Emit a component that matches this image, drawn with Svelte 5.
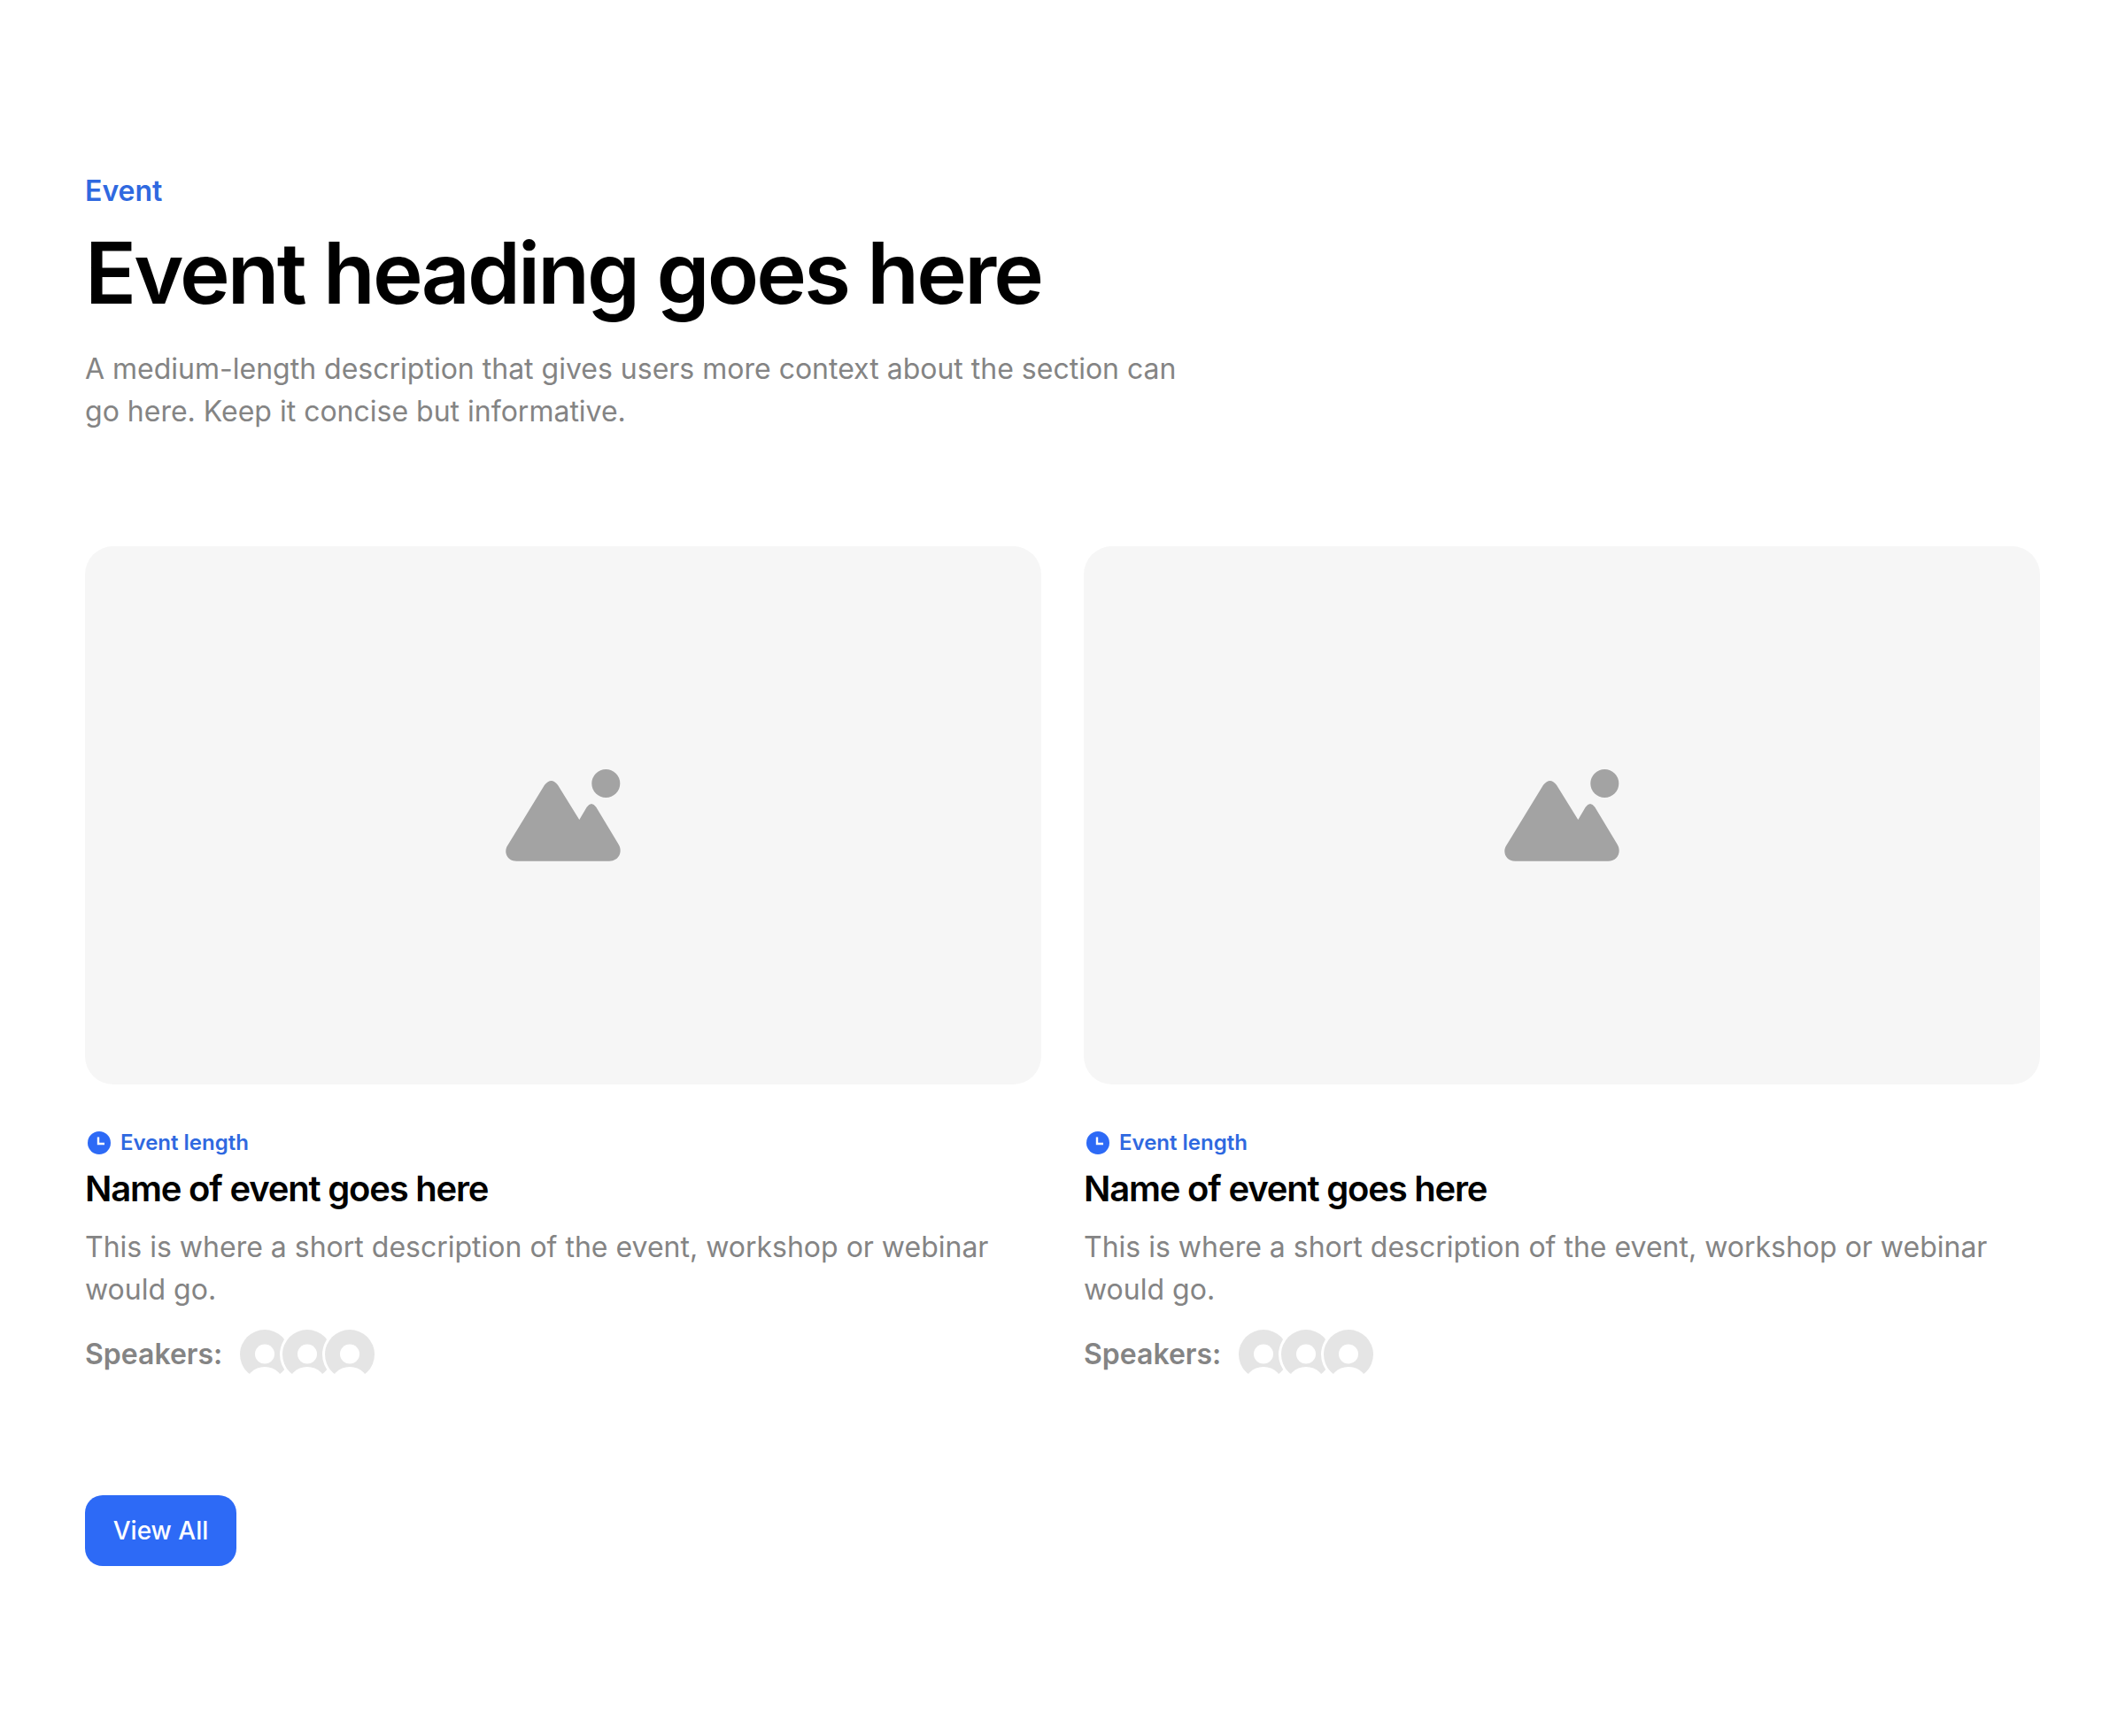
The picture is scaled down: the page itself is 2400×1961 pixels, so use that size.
<script lang="ts">
  const events = [
    { length: 'Event length', name: 'Name of event goes here', text: 'This is where a short description of the event, workshop or webinar would go.' },
    { length: 'Event length', name: 'Name of event goes here', text: 'This is where a short description of the event, workshop or webinar would go.' },
  ];
  const speakers = [0, 1, 2];
</script>

<section class="events">
  <header class="head">
    <p class="eyebrow">Event</p>
    <h1>Event heading goes here</h1>
    <p class="lead">A medium-length description that gives users more context about the section can go here. Keep it concise but informative.</p>
  </header>

  <div class="grid">
    {#each events as ev}
      <article class="card">
        <div class="thumb">
          <svg class="placeholder" viewBox="0 0 130 104" aria-hidden="true">
            <circle cx="113.3" cy="16" r="16" />
            <path d="M44 17.7Q51.7 8.3 59 17.7L83.3 57L91.7 42.7Q97 35.3 102.3 42.7L127.3 84.3C133 93 128 103.7 117.3 103.7H12.3C1.5 103.7 -2.5 93 2.3 86Z" />
          </svg>
        </div>
        <div class="meta">
          <svg class="clock" viewBox="0 0 26 26" aria-hidden="true">
            <circle cx="13" cy="13" r="13" />
            <path d="M12 6.5V14H19" />
          </svg>
          <span>{ev.length}</span>
        </div>
        <h2>{ev.name}</h2>
        <p class="desc">{ev.text}</p>
        <div class="speakers">
          <span class="label">Speakers:</span>
          <div class="avatars">
            {#each speakers as s (s)}
              <svg class="avatar" viewBox="0 0 62 62" aria-hidden="true">
                <circle class="ring" cx="31" cy="31" r="31" />
                <circle class="disc" cx="31" cy="31" r="28" />
                <circle class="cut" cx="31" cy="30.5" r="11" />
                <ellipse class="cut" cx="31" cy="66" rx="22" ry="21" />
              </svg>
            {/each}
          </div>
        </div>
      </article>
    {/each}
  </div>

  <button class="all" type="button">View All</button>
</section>

<style>
  :global(body) {
    margin: 0;
    background: #fff;
  }

  .events {
    display: flex;
    flex-direction: column;
    align-items: flex-start;
    gap: 128px;
    padding: 192px 96px;
    font-family: Inter, "Liberation Sans", sans-serif;
  }

  .head {
    display: flex;
    flex-direction: column;
  }

  .eyebrow {
    margin: 0 0 11px;
    font-size: 32px;
    line-height: 48px;
    font-weight: 600;
    color: #2f69e0;
  }

  h1 {
    margin: 0 0 27px;
    font-size: 96px;
    line-height: 115px;
    font-weight: 600;
    letter-spacing: -0.03em;
    color: #000;
  }

  .lead {
    margin: 0;
    max-width: 1260px;
    font-size: 32px;
    line-height: 48px;
    color: #848484;
  }

  .grid {
    display: grid;
    grid-template-columns: 1fr 1fr;
    gap: 48px;
    width: 100%;
  }

  .card {
    display: flex;
    flex-direction: column;
  }

  .thumb {
    display: flex;
    align-items: center;
    justify-content: center;
    aspect-ratio: 16 / 9;
    margin-bottom: 48px;
    border-radius: 32px;
    background: #f6f6f6;
  }

  .placeholder {
    width: 130px;
    height: 104px;
    overflow: visible;
    fill: #a3a3a3;
  }

  .meta {
    display: flex;
    align-items: center;
    gap: 11px;
    height: 36px;
    font-size: 24px;
    font-weight: 600;
    color: #2f69e0;
  }

  .clock {
    width: 26px;
    height: 26px;
    margin-left: 3px;
  }

  .clock circle {
    fill: #2d6af6;
  }

  .clock path {
    fill: none;
    stroke: #fff;
    stroke-width: 2.4;
  }

  h2 {
    margin: 4px 0 12px;
    font-size: 40px;
    line-height: 60px;
    font-weight: 600;
    letter-spacing: -0.03em;
    color: #000;
  }

  .desc {
    margin: 0 0 18px;
    font-size: 32px;
    line-height: 48px;
    color: #848484;
  }

  .speakers {
    display: flex;
    align-items: center;
    gap: 17px;
  }

  .label {
    font-size: 32px;
    font-weight: 600;
    color: #848484;
  }

  .avatars {
    display: flex;
  }

  .avatar {
    width: 62px;
    height: 62px;
    overflow: hidden;
  }

  .avatar + .avatar {
    margin-left: -14px;
  }

  .ring,
  .cut {
    fill: #fff;
  }

  .disc {
    fill: #e5e5e5;
  }

  .all {
    width: 171px;
    height: 80px;
    padding: 0;
    border: 0;
    border-radius: 20px;
    background: #2d6af6;
    color: #fff;
    font: 500 28px Inter, "Liberation Sans", sans-serif;
  }
</style>
